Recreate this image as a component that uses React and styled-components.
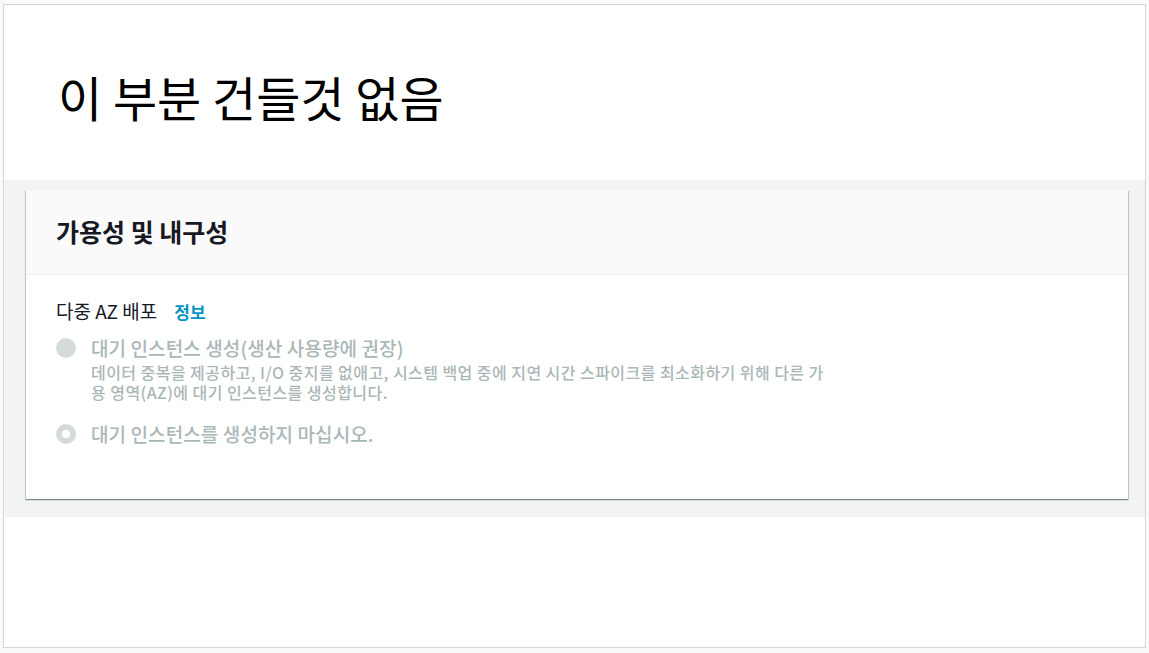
import React from "react";
import styled, { createGlobalStyle } from "styled-components";

const GlobalStyle = createGlobalStyle`
  html, body {
    margin: 0;
    padding: 0;
    background: #fafafa;
  }
  body {
    font-family: "Noto Sans CJK KR", "Noto Sans", sans-serif;
  }
`;

// styled //

const Frame = styled.div`
  margin: 4px 3px 0 3px;
  height: 644px;
  border: 1px solid #d5d5d5;
  background: #ffffff;
  box-sizing: border-box;
  display: flex;
  flex-direction: column;
`;

const Top = styled.div`
  height: 175px;
  padding: 6px 0 0 54px;
  box-sizing: border-box;
  display: flex;
  align-items: center;
`;

const Heading = styled.h1`
  margin: 0;
  font-size: 48px;
  font-weight: 400;
  color: #000000;
`;

const Band = styled.div`
  background: #f2f3f3;
  padding: 10px 17px 18px 22px;
`;

const Card = styled.div`
  background: #ffffff;
  box-shadow: 0 1px 1px 0 rgba(0, 28, 36, 0.3), 1px 1px 1px 0 rgba(0, 28, 36, 0.15),
    -1px 1px 1px 0 rgba(0, 28, 36, 0.15);
`;

const CardHeader = styled.div`
  height: 85px;
  background: #fafafa;
  border-bottom: 1px solid #eaeded;
  display: flex;
  align-items: center;
  padding: 0 0 3px 30px;
  box-sizing: border-box;
`;

const CardTitle = styled.h2`
  margin: 0;
  font-size: 25px;
  font-weight: 700;
  color: #16191f;
`;

const CardBody = styled.div`
  padding: 24px 30px 51px 30px;
`;

const FieldLabel = styled.div`
  display: flex;
  align-items: baseline;
  gap: 17px;
  font-size: 19px;
  color: #16191f;
  line-height: 24px;
`;

const Info = styled.a`
  font-size: 17px;
  font-weight: 700;
  color: #0096c4;
  text-decoration: none;
`;

const Options = styled.div`
  display: flex;
  flex-direction: column;
  gap: 18px;
  margin-top: 10px;
`;

const Option = styled.div`
  display: flex;
  gap: 15px;
`;

const Radio = styled.span`
  flex: none;
  width: 20px;
  height: 20px;
  margin-top: 4px;
  border-radius: 50%;
  background: #d5dbdb;
  position: relative;
  &::after {
    content: "";
    display: ${(p) => (p.checked ? "block" : "none")};
    position: absolute;
    left: 6px;
    top: 6px;
    width: 8px;
    height: 8px;
    border-radius: 50%;
    background: #ffffff;
  }
`;

const OptionText = styled.div`
  display: flex;
  flex-direction: column;
`;

const OptionTitle = styled.div`
  font-size: 19px;
  font-weight: 500;
  color: #aab7b8;
  line-height: 28px;
  letter-spacing: 0.1px;
`;

const OptionDesc = styled.div`
  font-size: 16px;
  font-weight: 500;
  color: #aab7b8;
  line-height: 20px;
  letter-spacing: 0.45px;
  max-width: 740px;
`;

const options = [
  {
    title: "대기 인스턴스 생성(생산 사용량에 권장)",
    desc: "데이터 중복을 제공하고, I/O 중지를 없애고, 시스템 백업 중에 지연 시간 스파이크를 최소화하기 위해 다른 가용 영역(AZ)에 대기 인스턴스를 생성합니다.",
    checked: false,
  },
  {
    title: "대기 인스턴스를 생성하지 마십시오.",
    checked: true,
  },
];

function App() {
  return (
    <>
      <GlobalStyle />
      <Frame>
        <Top>
          <Heading>이 부분 건들것 없음</Heading>
        </Top>
        <Band>
          <Card>
            <CardHeader>
              <CardTitle>가용성 및 내구성</CardTitle>
            </CardHeader>
            <CardBody>
              <FieldLabel>
                다중 AZ 배포 <Info>정보</Info>
              </FieldLabel>
              <Options>
                {options.map((o) => (
                  <Option key={o.title}>
                    <Radio checked={o.checked} />
                    <OptionText>
                      <OptionTitle>{o.title}</OptionTitle>
                      {o.desc && <OptionDesc>{o.desc}</OptionDesc>}
                    </OptionText>
                  </Option>
                ))}
              </Options>
            </CardBody>
          </Card>
        </Band>
      </Frame>
    </>
  );
}

export default App;
